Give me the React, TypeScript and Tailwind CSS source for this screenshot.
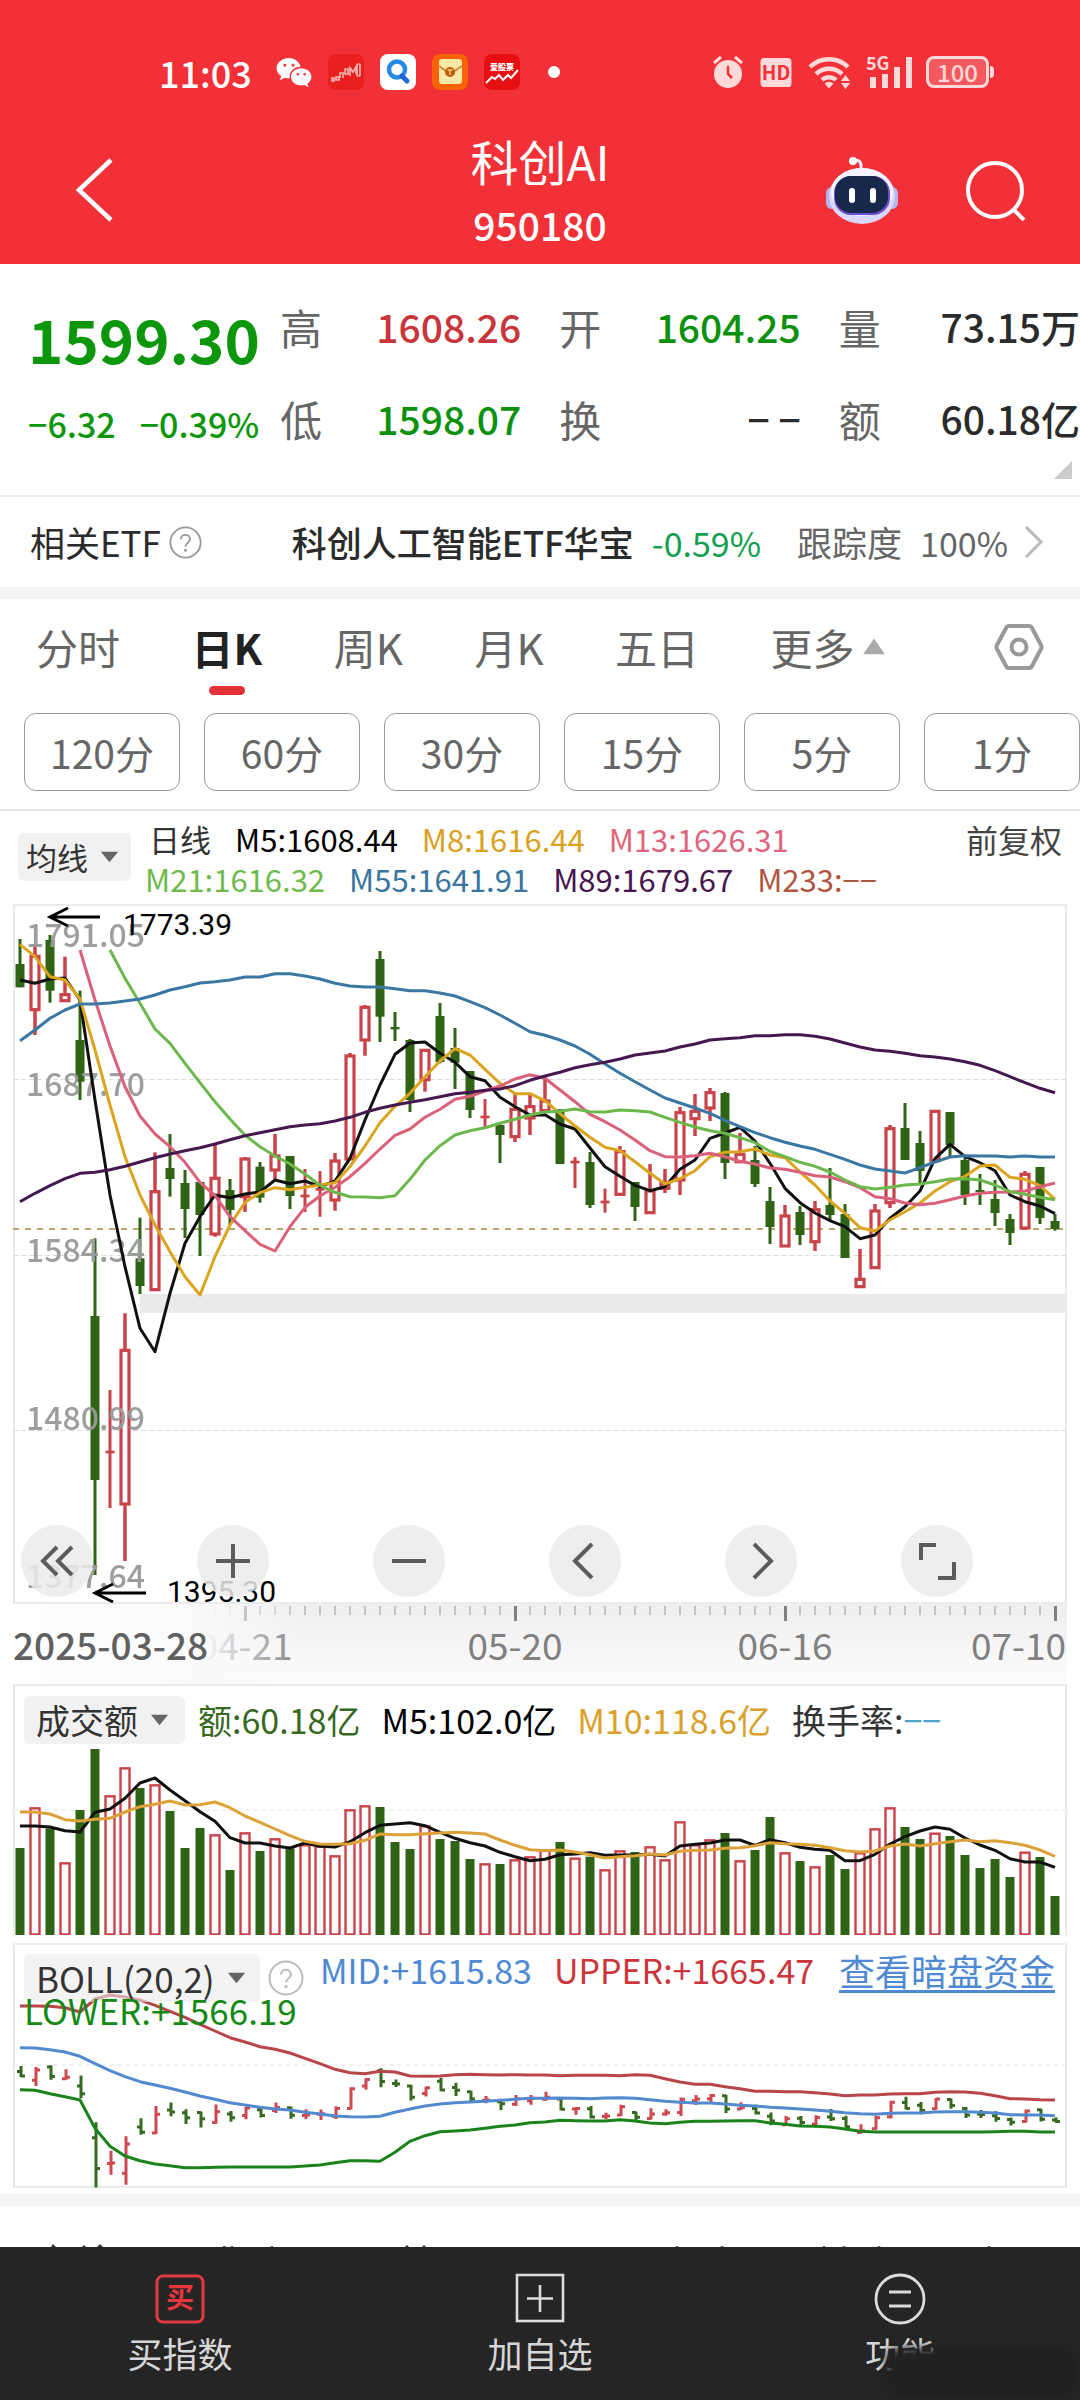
import type { ReactNode } from "react";

const RED = "#c9434a";
const GREEN = "#2f6416";

// [rising, high, body top, body bottom, low], in chart units (1/3 px, counted downwards)
type Candle = [number, number, number, number, number];

const candles: Candle[] = [
  [0, 117, 192, 262, 262],
  [1, 135, 166, 332, 405],
  [0, 105, 120, 272, 308],
  [1, 170, 281, 305, 305],
  [0, 272, 420, 545, 600],
  [0, 1015, 1248, 1740, 2025],
  [1, 1470, 1652, 1660, 1824],
  [1, 1240, 1348, 1815, 1983],
  [0, 953, 1075, 1158, 1182],
  [1, 757, 872, 1172, 1172],
  [0, 702, 804, 837, 890],
  [0, 810, 849, 927, 1014],
  [0, 846, 846, 945, 1068],
  [1, 732, 832, 1005, 1010],
  [0, 837, 870, 930, 975],
  [1, 771, 774, 893, 936],
  [0, 786, 800, 893, 908],
  [1, 702, 765, 813, 837],
  [0, 768, 768, 888, 927],
  [1, 807, 884, 892, 936],
  [1, 813, 864, 872, 950],
  [1, 759, 780, 903, 932],
  [1, 459, 465, 780, 780],
  [1, 315, 319, 423, 467],
  [0, 153, 177, 350, 426],
  [0, 336, 381, 388, 423],
  [0, 417, 420, 600, 636],
  [1, 448, 448, 542, 575],
  [0, 309, 348, 486, 490],
  [0, 384, 444, 488, 567],
  [0, 513, 513, 630, 654],
  [1, 597, 647, 655, 683],
  [0, 672, 675, 705, 789],
  [1, 582, 625, 713, 726],
  [1, 582, 617, 657, 705],
  [1, 530, 600, 635, 640],
  [0, 628, 628, 792, 792],
  [1, 771, 782, 790, 864],
  [0, 756, 786, 915, 924],
  [1, 866, 902, 910, 938],
  [1, 738, 752, 886, 888],
  [0, 846, 846, 921, 963],
  [1, 792, 870, 941, 941],
  [1, 807, 848, 868, 879],
  [1, 621, 635, 843, 885],
  [1, 582, 631, 659, 708],
  [1, 564, 575, 627, 663],
  [0, 576, 579, 789, 837],
  [1, 699, 760, 788, 790],
  [0, 738, 780, 852, 861],
  [0, 861, 903, 981, 1032],
  [1, 915, 945, 1041, 1041],
  [0, 918, 936, 1005, 1035],
  [1, 903, 926, 1028, 1053],
  [0, 804, 915, 945, 963],
  [0, 912, 942, 1074, 1074],
  [1, 1047, 1135, 1163, 1163],
  [1, 912, 930, 1106, 1106],
  [1, 675, 683, 911, 924],
  [0, 609, 684, 780, 780],
  [0, 693, 729, 813, 855],
  [1, 631, 631, 785, 785],
  [0, 636, 636, 735, 770],
  [0, 771, 780, 885, 915],
  [0, 822, 870, 876, 915],
  [0, 840, 897, 939, 978],
  [0, 942, 957, 999, 1035],
  [1, 813, 820, 987, 990],
  [0, 801, 801, 954, 972],
  [0, 942, 963, 987, 992],
];

const m5 = [
  240, 250, 237, 234, 300, 600, 885, 1100, 1285, 1355, 1180, 1030, 950, 885, 893, 882, 876, 840,
  851, 843, 860, 843, 775, 660, 555, 463, 429, 426, 460, 487, 530, 542, 592, 620, 645, 644, 672,
  687, 744, 800, 829, 856, 872, 860, 808, 780, 715, 699, 682, 723, 790, 865, 908, 939, 962, 980,
  1016, 1005, 955, 920, 873, 776, 733, 770, 788, 812, 885, 905, 918, 941,
];
const m8 = [
  133, 170, 230, 240, 297, 450, 615, 770, 885, 975, 1055, 1130, 1185, 1070, 975, 907, 878, 863,
  869, 862, 855, 848, 800, 738, 668, 619, 580, 530, 483, 446, 465, 508, 550, 581, 581, 602, 641,
  678, 712, 742, 752, 785, 820, 852, 836, 812, 770, 757, 755, 747, 765, 773, 816, 855, 903, 940,
  983, 993, 960, 935, 909, 873, 845, 829, 798, 795, 832, 838, 857, 898,
];
const m13 = [
  150, 300, 438, 560, 648, 702, 740, 787, 847, 887, 950, 992, 1033, 1053, 980, 922, 888, 862, 830,
  790, 747, 706, 687, 652, 628, 598, 589, 573, 558, 537, 524, 535, 570, 605, 643, 665, 690, 720,
  752, 770, 771, 767, 760, 770, 784, 792, 804, 808, 817, 827, 831, 845, 863, 890, 896, 909, 914,
  910, 899, 888, 880, 877, 876, 873, 860, 849,
];
const m21 = [
  150, 235, 310, 387, 430, 490, 548, 605, 657, 706, 740, 768, 792, 822, 856, 877, 890, 891, 893,
  887, 838, 780, 737, 705, 692, 683, 670, 658, 645, 636, 634, 627, 635, 636, 630, 632, 636, 652,
  667, 681, 692, 700, 713, 728, 754, 770, 787, 799, 816, 840, 860, 867, 862, 855, 852, 845, 837,
  836, 840, 855, 875, 883, 892, 899,
];
const m55 = [
  422, 390, 355, 330, 312, 312, 309, 303, 297, 285, 270, 260, 249, 245, 240, 231, 231, 221, 221,
  228, 237, 250, 258, 261, 261, 266, 272, 272, 279, 288, 305, 323, 345, 370, 395, 406, 420, 438,
  463, 492, 520, 545, 570, 594, 609, 624, 640, 661, 680, 698, 713, 727, 738, 748, 763, 778, 795,
  807, 813, 819, 803, 786, 771, 767, 768, 768, 771, 768, 771, 771,
];
const m89 = [
  905, 880, 857, 836, 820, 817, 809, 799, 786, 773, 762, 752, 743, 732, 719, 707, 698, 689, 680,
  675, 671, 663, 652, 637, 625, 615, 607, 599, 590, 581, 577, 571, 567, 557, 541, 528, 517, 503,
  494, 487, 477, 465, 459, 453, 441, 432, 420, 416, 413, 407, 407, 404, 404, 409, 417, 429, 441,
  450, 454, 460, 467, 471, 477, 485, 496, 512, 530, 548, 565, 578,
];

const volumes = [
  504, 382, 445, 547, 390, 207, 346, 262, 324, 313, 393, 504, 444, 463, 570, 457, 513, 475, 505,
  493, 497, 526, 388, 376, 381, 486, 507, 436, 477, 483, 537, 550, 552, 538, 529, 508, 486, 533,
  530, 568, 511, 516, 499, 538, 424, 493, 478, 459, 541, 510, 411, 517, 543, 559, 525, 567, 517,
  445, 382, 441, 477, 458, 468, 525, 564, 537, 591, 515, 531, 648,
];
const volM5 = [
  438, 438, 441, 452, 456, 397, 387, 355, 309, 294, 330, 362, 395, 424, 473, 489, 489, 498, 504,
  489, 499, 501, 485, 458, 436, 432, 428, 437, 457, 475, 488, 498, 517, 530, 542, 538, 524, 522,
  518, 526, 525, 525, 523, 528, 498, 493, 489, 480, 480, 496, 479, 488, 502, 508, 511, 542, 542,
  523, 492, 470, 453, 441, 448, 474, 495, 511, 536, 546, 546, 562,
];
const volM10 = [
  396, 396, 402, 419, 423, 418, 415, 396, 380, 373, 363, 375, 374, 366, 383, 408, 427, 447, 467,
  484, 492, 493, 491, 481, 462, 464, 464, 461, 459, 457, 459, 462, 480, 496, 509, 512, 510, 516,
  524, 534, 530, 527, 522, 525, 514, 511, 510, 505, 503, 497, 488, 491, 493, 496, 503, 512, 516,
  513, 498, 492, 498, 491, 485, 480, 485, 482, 488, 496, 510, 529,
];

const bollUpper = [
  228, 228, 229, 233, 246, 207, 195, 201, 210, 226, 244, 262, 283, 303, 323, 336, 350, 358, 369,
  385, 401, 418, 428, 431, 424, 426, 438, 439, 438, 434, 433, 434, 435, 434, 435, 435, 437, 436,
  436, 436, 437, 434, 436, 446, 456, 463, 463, 470, 476, 484, 484, 485, 485, 488, 492, 497, 495,
  495, 492, 491, 491, 487, 485, 486, 490, 497, 506, 507, 509, 510,
];
const bollMid = [
  353, 354, 359, 366, 379, 401, 422, 440, 455, 465, 475, 486, 498, 508, 518, 525, 532, 537, 540,
  547, 552, 558, 560, 561, 559, 547, 537, 528, 522, 518, 516, 514, 511, 508, 505, 505, 504, 505,
  506, 504, 503, 505, 509, 514, 517, 519, 519, 522, 526, 528, 532, 534, 537, 540, 544, 548, 551,
  553, 550, 549, 549, 546, 545, 545, 547, 549, 554, 555, 555, 557,
];
const bollLower = [
  479, 481, 491, 500, 510, 595, 649, 678, 692, 702, 707, 713, 713, 712, 711, 711, 711, 711, 711,
  708, 705, 698, 692, 692, 694, 667, 634, 617, 605, 603, 600, 595, 589, 585, 578, 576, 571, 572,
  573, 573, 569, 573, 579, 581, 577, 574, 574, 573, 572, 572, 579, 583, 588, 589, 591, 597, 604,
  606, 606, 606, 606, 606, 606, 606, 606, 605, 604, 604, 606, 606,
];

const xAt = (i: number) => 7 + 15 * i;

function Line({ data, color, start = 0, top }: { data: number[]; color: string; start?: number; top: number }) {
  const points = data.map((v, i) => `${xAt(i + start)},${(v / 3 - top).toFixed(1)}`).join(" ");
  return <polyline points={points} fill="none" stroke={color} strokeWidth="3" strokeLinejoin="round" />;
}

function Dashed({ y, color = "#dcdcdc", dash = "5 3", width = 1 }: { y: number; color?: string; dash?: string; width?: number }) {
  return <line x1="0" x2="1054" y1={y} y2={y} stroke={color} strokeWidth={width} strokeDasharray={dash} />;
}

function Caret({ up = false, className = "" }: { up?: boolean; className?: string }) {
  return (
    <svg viewBox="0 0 20 14" className={className} aria-hidden="true">
      <path d={up ? "M10 0L19 13H1z" : "M0 1h20L10 13z"} fill="currentColor" />
    </svg>
  );
}

function Help({ className }: { className: string }) {
  return (
    <svg viewBox="0 0 36 36" className={className} fill="none" stroke="currentColor" strokeWidth="2">
      <circle cx="18" cy="18" r="16.5" />
      <path d="M13 14.5c0-6.400 10-6.400 10 0 0 3.800-5 3.800-5 8" />
      <circle cx="18" cy="26.500" r="0.700" />
    </svg>
  );
}

function StatusBar() {
  return (
    <div className="flex h-12 items-center pr-[86px] pl-[159px] text-white">
      <span className="text-4xl font-medium">11:03</span>
      <svg viewBox="0 0 36 32" className="ml-6 h-[31px] w-[36px]">
        <path
          fill="#fff"
          d="M13 1C6 1 0 5.700 0 11.500c0 3.300 1.900 6.200 4.800 8.100L3.500 24l5-2.600c1.400.4 2.900.6 4.500.6h.8C12.500 16 17 10.200 24.800 10 23.500 4.700 18.700 1 13 1z"
        />
        <path
          fill="#fff"
          d="M36 20.500c0-5-4.800-9-10.600-9s-10.500 4-10.500 9 4.700 9 10.500 9c1.200 0 2.400-.2 3.500-.5l4 2.300-1.100-3.700c2.600-1.700 4.200-4.200 4.200-7.100z"
        />
        <g fill="#f13037">
          <circle cx="8.600" cy="8.500" r="1.500" />
          <circle cx="17" cy="8.500" r="1.500" />
          <circle cx="22" cy="17.800" r="1.300" />
          <circle cx="29" cy="17.800" r="1.300" />
        </g>
      </svg>
      <svg viewBox="0 0 36 36" className="ml-4 size-9">
        <rect width="36" height="36" rx="8" fill="#e9201f" />
        <g fill="none" stroke="#f7b9b4" strokeWidth="1.600">
          <path d="M4 24h2v3H4zM8 23h3v3H8z" />
          <path d="M12 24v-5h3v5M17 20v-5h3v5zM22 22v-8l3 4 3-5v7" />
          <rect x="29" y="10" width="3" height="12" rx="1" />
        </g>
      </svg>
      <svg viewBox="0 0 36 36" className="ml-4 size-9">
        <rect width="36" height="36" rx="8" fill="#fff" />
        <circle cx="17" cy="15.500" r="8" fill="none" stroke="#2589e6" strokeWidth="4.500" />
        <path d="M22 22l5 5" stroke="#2067d8" strokeWidth="5" strokeLinecap="round" />
      </svg>
      <svg viewBox="0 0 36 36" className="ml-4 size-9">
        <rect width="36" height="36" rx="8" fill="#f96208" />
        <rect x="7" y="5" width="23" height="25" rx="3" fill="#fbe7a6" />
        <path d="M7 12l11 8 12-8" fill="none" stroke="#c98a3a" strokeWidth="2" />
        <circle cx="18" cy="18" r="5" fill="#bf5b10" />
        <path d="M15.500 16h5M18 16v5" stroke="#f6c97a" strokeWidth="1.400" />
      </svg>
      <svg viewBox="0 0 36 36" className="ml-4 size-9">
        <rect width="36" height="36" rx="8" fill="#e60f12" />
        <text x="18" y="16" textAnchor="middle" fill="#fff" className="text-[8px] font-black">
          爱股票
        </text>
        <path d="M2 29l6-6 3 2 4-4 4 5 5-5 3 3 7-8" fill="none" stroke="#fff" strokeWidth="2" />
      </svg>
      <span className="ml-7 size-3 rounded-full bg-white" />
      <div className="ml-auto flex items-center gap-4 text-[#fdd9da]">
        <svg viewBox="0 0 32 34" className="h-[34px] w-8" fill="none" stroke="currentColor">
          <circle cx="16" cy="19" r="14" fill="currentColor" stroke="none" />
          <path d="M2 8l7-6M30 8l-7-6" strokeWidth="3" />
          <path d="M16 11v8l4 4" stroke="#f13037" strokeWidth="2.500" />
        </svg>
        <svg viewBox="0 0 32 30" className="h-[29px] w-8">
          <rect width="32" height="30" rx="4" fill="currentColor" />
          <text x="16" y="23" textAnchor="middle" fill="#f13037" className="text-[20px] font-bold">
            HD
          </text>
        </svg>
        <svg viewBox="0 0 46 36" className="h-[36px] w-[46px]" fill="none" stroke="currentColor">
          <path d="M2 13a27 27 0 0 1 38 0M8 20a19 19 0 0 1 26 0M14 26a10 10 0 0 1 14 0" strokeWidth="4.500" />
          <path d="M16.500 29.500l4.500 5 4.500-5a7 7 0 0 0-9 0zM33 27l4.500-6 4.500 6zM33 29l4.500 6 4.500-6z" fill="currentColor" stroke="none" />
        </svg>
        <svg viewBox="0 0 48 34" className="-ml-1 h-[34px] w-12 overflow-visible" fill="currentColor">
          <text x="0" y="15" className="text-[18px] font-bold">
            5G
          </text>
          <path d="M4 22h6v11H4zM16 19h6v14h-6zM28 12h6v21h-6zM40 2h6v31h-6z" />
        </svg>
        <div className="-ml-1 flex items-center">
          <span className="flex h-8 w-[63px] items-center justify-center rounded-lg border-3 border-current bg-white/20 text-2xl font-medium">
            100
          </span>
          <span className="ml-px h-3 w-1 rounded-r bg-current" />
        </div>
      </div>
    </div>
  );
}

function Header() {
  return (
    <header className="bg-[#f13037] pt-12 text-white">
      <StatusBar />
      <div className="grid grid-cols-3 items-center pt-5">
        <button aria-label="返回" className="ml-[74px] justify-self-start">
          <svg viewBox="0 0 40 64" className="h-16 w-10" fill="none" stroke="#fff" strokeWidth="4.500">
            <path d="M37 2L5 32l32 30" />
          </svg>
        </button>
        <div className="pt-3 pb-2 text-center">
          <h1 className="text-[48px] leading-16">科创AI</h1>
          <p className="text-[39px] leading-16 font-medium">950180</p>
        </div>
        <div className="flex items-center justify-end gap-[66px] pr-[52px]">
          <button aria-label="智能助手">
            <svg viewBox="0 0 76 70" className="h-[70px] w-[76px]">
              <path d="M37 14c1-8-3-10-8-8" fill="none" stroke="#e9e9ff" strokeWidth="3" />
              <circle cx="29" cy="6" r="4" fill="#fff" />
              <rect x="2" y="32" width="12" height="22" rx="6" fill="#b5b3f2" />
              <rect x="62" y="32" width="12" height="22" rx="6" fill="#b5b3f2" />
              <ellipse cx="38" cy="41" rx="33" ry="28" fill="#d9d8fb" />
              <ellipse cx="38" cy="37" rx="31" ry="24" fill="#f3f3ff" />
              <rect x="10" y="21" width="56" height="39" rx="17" fill="#6d4fd0" />
              <rect x="11" y="21" width="53" height="37" rx="16" fill="#17284a" />
              <rect x="25" y="33" width="6" height="15" rx="3" fill="#fff" />
              <rect x="46" y="33" width="6" height="15" rx="3" fill="#fff" />
            </svg>
          </button>
          <button aria-label="搜索">
            <svg viewBox="0 0 62 62" className="size-[62px]" fill="none" stroke="#fff" strokeWidth="4">
              <circle cx="29" cy="31" r="27" />
              <path d="M47 50l11 11" />
            </svg>
          </button>
        </div>
      </div>
    </header>
  );
}

function Stat({ label, value, color }: { label: string; value: ReactNode; color: string }) {
  return (
    <div className="flex items-center justify-between">
      <dt className="text-[42px] text-[#666]">{label}</dt>
      <dd className={`text-[39px] font-medium whitespace-nowrap ${color}`}>{value}</dd>
    </div>
  );
}

function Quote() {
  return (
    <section className="relative flex h-[233px] border-b-2 border-[#ececec] pt-4">
      <div className="w-[280px] shrink-0 pt-2 pl-7 text-[#0b960b]">
        <p className="text-[60px] leading-25 font-bold">1599.30</p>
        <p className="flex gap-6 text-[34px] leading-18 font-medium whitespace-nowrap">
          <span>−6.32</span>
          <span>−0.39%</span>
        </p>
      </div>
      <dl className="grid h-[184px] flex-1 grid-cols-3 gap-x-[38px]">
        <Stat label="高" value="1608.26" color="text-[#c8353b]" />
        <Stat label="开" value="1604.25" color="text-[#0b910b]" />
        <Stat label="量" value="73.15万" color="text-[#2b2b2b]" />
        <Stat label="低" value="1598.07" color="text-[#0b910b]" />
        <Stat label="换" value="− −" color="text-[#2b2b2b]" />
        <Stat label="额" value="60.18亿" color="text-[#2b2b2b]" />
      </dl>
      <svg viewBox="0 0 18 18" className="absolute right-2 bottom-4 size-[18px]">
        <path d="M18 0v18H0z" fill="#ccc" />
      </svg>
    </section>
  );
}

function RelatedEtf() {
  return (
    <a href="#etf" className="flex h-[90px] items-center pr-9 pl-[30px] text-[34px] text-[#2b2b2b]">
      <span className="text-[35px]">相关ETF</span>
      <Help className="ml-2 size-[33px] text-[#999]" />
      <span className="ml-auto text-[35px] font-medium">科创人工智能ETF华宝</span>
      <span className="ml-[18px] text-[#12a050]">-0.59%</span>
      <span className="ml-9 text-[35px] text-[#666]">跟踪度</span>
      <span className="ml-[18px] text-[#666]">100%</span>
      <svg viewBox="0 0 20 32" className="ml-4 h-8 w-5" fill="none" stroke="#bbb" strokeWidth="3">
        <path d="M2 1l15 15L2 31" />
      </svg>
    </a>
  );
}

const tabs = ["分时", "日K", "周K", "月K", "五日"];
const minutes = ["120分", "60分", "30分", "15分", "5分", "1分"];

function Tabs() {
  return (
    <nav>
      <div className="flex items-center justify-between pt-4 pr-9 pl-9 text-[42px] leading-16 text-[#666]">
        {tabs.map((tab) => (
          <button key={tab} className={tab === "日K" ? "relative font-bold text-[#222]" : ""}>
            {tab}
            {tab === "日K" && (
              <span className="absolute -bottom-4 left-1/2 h-[9px] w-9 -translate-x-1/2 rounded-full bg-[#e33237]" />
            )}
          </button>
        ))}
        <button className="flex items-center gap-2">
          更多
          <Caret up className="h-[18px] w-6 text-[#aaa]" />
        </button>
        <button aria-label="设置" className="ml-9">
          <svg viewBox="0 0 50 48" className="h-12 w-[50px]" fill="none" stroke="#999" strokeWidth="4">
            <path d="M15 3h20q2 0 3 2l9 17q1 2 0 4l-9 17q-1 2-3 2H15q-2 0-3-2L3 26q-1-2 0-4l9-17q1-2 3-2z" />
            <circle cx="25" cy="24" r="7.500" />
          </svg>
        </button>
      </div>
      <div className="grid grid-cols-6 gap-6 border-b-2 border-[#e6e6e6] pt-[34px] pb-[18px] pl-6">
        {minutes.map((m) => (
          <button key={m} className="h-[78px] rounded-xl border border-[#999] text-[39px] text-[#666]">
            {m}
          </button>
        ))}
      </div>
    </nav>
  );
}

function PickerButton({ children, className = "" }: { children: ReactNode; className?: string }) {
  return (
    <button className={`flex h-12 shrink-0 items-center rounded-md bg-[#f1f1f1] text-[#333] ${className}`}>
      {children}
      <Caret className="ml-3 h-3 w-[19px] text-[#666]" />
    </button>
  );
}

function MaLegend() {
  return (
    <div className="flex items-start pt-1 pr-[18px] pb-[5px] pl-[18px] text-[31px] leading-10">
      <PickerButton className="mt-[18px] pr-3 pl-2">均线</PickerButton>
      <div className="pt-1 pl-[14px]">
        <div className="flex gap-6 pl-1">
          <span className="text-[#333]">日线</span>
          <span className="text-black">M5:1608.44</span>
          <span className="text-[#d9a11e]">M8:1616.44</span>
          <span className="text-[#e0647c]">M13:1626.31</span>
        </div>
        <div className="flex gap-6">
          <span className="text-[#6dbb4b]">M21:1616.32</span>
          <span className="text-[#38759f]">M55:1641.91</span>
          <span className="text-[#47164f]">M89:1679.67</span>
          <span className="text-[#b05540]">M233:−−</span>
        </div>
      </div>
      <button className="mt-1 ml-auto text-[32px] text-[#444]">前复权</button>
    </div>
  );
}

const controls = [
  { name: "展开", d: "M17 3L3 17l14 14M32 3L18 17l14 14" },
  { name: "放大", d: "M17 0v34M0 17h34" },
  { name: "缩小", d: "M0 17h34" },
  { name: "左移", d: "M24 0L7 17l17 17" },
  { name: "右移", d: "M10 0l17 17-17 17" },
  { name: "全屏", d: "M16 1H1v15M34 18v16H18" },
];

function PriceChart() {
  return (
    <div className="relative mx-[13px]">
      <svg viewBox="0 0 1054 700" className="block w-full overflow-visible" role="img" aria-label="日K线">
        <rect x="1" y="1" width="1052" height="698" fill="none" stroke="#ebebeb" strokeWidth="2" />
        <rect x="127" y="390" width="927" height="19" fill="#eaeaea" />
        <Dashed y={175.5} />
        <Dashed y={351.5} />
        <Dashed y={526.5} />
        <Dashed y={325} color="#b9a56d" dash="6 6" width={2} />
        {candles.map(([up, high, top, bottom, low], i) => {
          const x = xAt(i);
          const [h, t, b, l] = [high, top, bottom, low].map((v) => v / 3 - 4);
          if (!up || b - t < 4) {
            return (
              <g key={i} fill={up ? RED : GREEN}>
                <rect x={x - 1.5} y={h} width="3" height={l - h} />
                <rect x={x - 4.5} y={t} width="9" height={b - t} />
              </g>
            );
          }
          return (
            <g key={i}>
              <path d={`M${x} ${h}V${t}M${x} ${b}V${l}`} stroke={RED} strokeWidth="3.500" />
              <rect x={x - 4} y={t + 1} width="8" height={b - t - 2} fill="#fff" stroke={RED} strokeWidth="3.200" />
            </g>
          );
        })}
        <g fill="#999" className="text-[32px] font-medium" opacity="0.95">
          <text x="13" y="43">1791.05</text>
          <text x="13" y="192">1687.70</text>
          <text x="13" y="358">1584.34</text>
          <text x="13" y="526">1480.99</text>
          <text x="13" y="684">1377.64</text>
        </g>
        <Line data={m5} color="#111" top={4} />
        <Line data={m8} color="#dca520" top={4} />
        <Line data={m13} color="#db6079" start={4} top={4} />
        <Line data={m21} color="#6cb84c" start={6} top={4} />
        <Line data={m55} color="#3a78a3" top={4} />
        <Line data={m89} color="#451850" top={4} />
        <g fill="none" stroke="#000" strokeWidth="3">
          <path d="M87 13H37M55 4L37 13l18 9" />
          <path d="M133 689H82M100 680l-18 9 18 9" />
        </g>
        <g className="font-[Roboto] text-[30px]">
          <text x="110" y="31">1773.39</text>
          <text x="154" y="698">1395.30</text>
        </g>
      </svg>
      <div className="absolute inset-x-0 bottom-[7px] flex justify-between pr-[94px] pl-2">
        {controls.map(({ name, d }) => (
          <button
            key={name}
            aria-label={name}
            className="flex size-[72px] items-center justify-center rounded-full bg-[#ebebeb]/85"
          >
            <svg viewBox="-2 -2 38 38" className="size-[38px]" fill="none" stroke="#5c5c5c" strokeWidth="4">
              <path d={d} />
            </svg>
          </button>
        ))}
      </div>
    </div>
  );
}

function DateAxis() {
  const ticks = Array.from({ length: 57 }, (_, k) => k + 13);
  return (
    <div className="mx-[13px] bg-linear-to-b from-[#eeeeee] to-[#fcfcfc]">
      <svg viewBox="0 0 1054 80" className="block w-full">
        <defs>
          <linearGradient id="fade">
            <stop offset="0" stopColor="#fff" />
            <stop offset="0.650" stopColor="#fafafa" />
            <stop offset="1" stopColor="#fafafa" stopOpacity="0" />
          </linearGradient>
        </defs>
        {ticks.map((i) => {
          const major = i % 18 === 15;
          return (
            <rect
              key={i}
              x={xAt(i) - 1}
              y="2"
              width={major ? 3 : 2}
              height={major ? 15 : 9}
              fill={major ? "#808080" : "#c4c4c4"}
            />
          );
        })}
        <g fill="#808080" className="text-[37px]" textAnchor="middle">
          <text x="232" y="56">04-21</text>
          <text x="502" y="56">05-20</text>
          <text x="772" y="56">06-16</text>
          <text x="1053" y="56" textAnchor="end">
            07-10
          </text>
        </g>
        <rect width="290" height="80" fill="url(#fade)" />
        <text x="0" y="56" fill="#606060" className="text-[37px] font-medium">
          2025-03-28
        </text>
      </svg>
    </div>
  );
}

function VolumeChart() {
  return (
    <div className="mx-[13px] border-2 border-[#ebebeb] border-b-transparent pt-[10px]">
      <div className="flex items-center gap-[21px] pl-[9px] text-[34px] leading-12 whitespace-nowrap">
        <PickerButton className="-mr-2 pr-4 pl-3">成交额</PickerButton>
        <span className="text-[#36681d]">额:60.18亿</span>
        <span className="text-black">M5:102.0亿</span>
        <span className="text-[#dba02a]">M10:118.6亿</span>
        <span className="text-[#333]">
          换手率:<span className="text-[#4fa3cb]">−−</span>
        </span>
      </div>
      <svg viewBox="2 59 1050 191" className="block w-full" role="img" aria-label="成交额">
        <Dashed y={125} color="#e4e4e4" />
        {volumes.map((v, i) => {
          const y = v / 3 - 5;
          return candles[i][0] ? (
            <rect key={i} x={xAt(i) - 4.5} y={y + 1} width="9" height={248.500 - y} fill="#fffafa" stroke={RED} strokeWidth="2.400" />
          ) : (
            <rect key={i} x={xAt(i) - 4.5} y={y} width="9" height={250 - y} fill={GREEN} />
          );
        })}
        <Line data={volM5} color="#111" top={5} />
        <Line data={volM10} color="#dca238" top={5} />
      </svg>
    </div>
  );
}

// The BOLL pane shows the same candles on a flatter scale.
const bollY = (v: number) => (531 + (v - 757) * 0.188) / 3 - 13;

function BollChart() {
  return (
    <div className="relative mx-[13px] mt-[6px]">
      <svg viewBox="0 0 1054 245" className="block w-full" role="img" aria-label="BOLL">
        <rect x="1" y="1" width="1052" height="243" fill="none" stroke="#ebebeb" strokeWidth="2" />
        <Dashed y={122} color="#e4e4e4" />
        {candles.map(([up, high, top, bottom, low], i) => {
          const x = xAt(i) + 1;
          const [h, t, b, l] = [high, top, bottom, low].map(bollY);
          const open = up ? b : t;
          const close = up ? t : b;
          return (
            <path
              key={i}
              d={`M${x} ${h - 1}V${l + 1}M${x - 4} ${open}h4M${x} ${close}h4`}
              stroke={up ? "#cf474f" : "#356a20"}
              strokeWidth="3"
            />
          );
        })}
        <Line data={bollUpper} color="#b8454a" top={13} />
        <Line data={bollMid} color="#5289cf" top={13} />
        <Line data={bollLower} color="#1b831b" top={13} />
      </svg>
      <div className="absolute inset-x-0 top-0 pt-[11px] pl-[11px] text-[35px] whitespace-nowrap">
        <div className="flex h-8 items-start pr-3 leading-8">
          <button className="flex h-12 w-[236px] items-center rounded-md bg-[#ebebeb]/60 pl-3 text-[#333]">
            BOLL(20,2)
            <Caret className="ml-3 h-3 w-[19px] text-[#666]" />
          </button>
          <Help className="mt-[6px] ml-2 size-9 text-[#bbb]" />
          <span className="ml-4 text-[34px] text-[#5089d3]">MID:+1615.83</span>
          <span className="ml-[22px] text-[34px] text-[#cb363c]">UPPER:+1665.47</span>
          <a href="#funds" className="ml-auto text-[36px] text-[#5089d3] underline underline-offset-4">
            查看暗盘资金
          </a>
        </div>
        <p className="leading-12 text-[#148a14]">LOWER:+1566.19</p>
      </div>
    </div>
  );
}

function BottomNav() {
  return (
    <nav className="relative grid h-[153px] grid-cols-3 overflow-hidden bg-[#252525] text-[35px] leading-12 text-[#d6d6d6]">
      <button className="flex flex-col items-center pt-[26px]">
        <svg viewBox="0 0 50 52" className="h-[52px] w-[50px]">
          <rect x="2" y="3" width="46" height="46" rx="6" fill="none" stroke="#de3a40" strokeWidth="3" />
          <text x="25" y="35" textAnchor="middle" fill="#e8363d" className="text-[28px] font-bold">
            买
          </text>
        </svg>
        <span className="mt-1">买指数</span>
      </button>
      <button className="flex flex-col items-center pt-[26px]">
        <svg viewBox="0 0 50 52" className="h-[52px] w-[50px]" fill="none" stroke="#dcdcdc" strokeWidth="2.600">
          <rect x="2" y="2" width="46" height="46" />
          <path d="M25 12v27M12 25.500h26" />
        </svg>
        <span className="mt-1">加自选</span>
      </button>
      <button className="flex flex-col items-center pt-[26px]">
        <svg viewBox="0 0 52 52" className="size-[52px]" fill="none" stroke="#dcdcdc" strokeWidth="2.800">
          <circle cx="26" cy="26" r="24" />
          <path d="M15 19h22M15 33h22" />
        </svg>
        <span className="mt-1">功能</span>
      </button>
      <div className="absolute right-1 bottom-1 h-12 w-[190px] rounded-xl bg-[#212121] blur-[4px]" />
    </nav>
  );
}

export default function App() {
  return (
    <div className="flex min-h-screen w-full flex-col overflow-hidden bg-white font-['Noto_Sans_CJK_SC','Noto_Sans',sans-serif]">
      <Header />
      <Quote />
      <RelatedEtf />
      <div className="h-3 bg-[#f4f4f4]" />
      <Tabs />
      <MaLegend />
      <PriceChart />
      <DateAxis />
      <VolumeChart />
      <BollChart />
      <div className="mt-[6px] h-3 bg-[#f4f4f4]" />
      <div className="mt-auto">
        <svg viewBox="0 0 1080 41" className="block w-full" fill="#333">
          <path d="M51 41l2-3 3 3zM82 41l2-2 2 2zM97 41l3-3 3 3zM222 41l2-1 3 1zM230 41l2-1 2 1zM269 41h4v-1zM405 41l2-2 2 2zM422 41l2-2 2 2zM675 41l2-1 2 1zM720 41l2-1 2 1zM822 41l2-1 2 1zM842 41l2-1 2 1zM877 41l2-1 2 1zM987 41l2-1 2 1z" />
        </svg>
        <BottomNav />
      </div>
    </div>
  );
}
